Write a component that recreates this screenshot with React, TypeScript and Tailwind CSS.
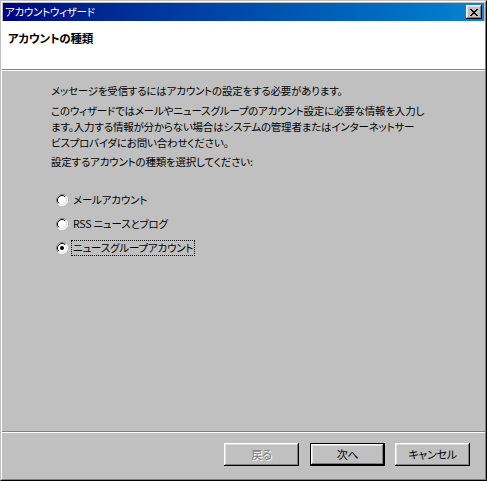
import React from "react";

const font = {
  fontFamily: '"Noto Sans CJK JP", "Liberation Sans", sans-serif',
  fontFeatureSettings: '"palt"',
};

function Radio({ checked }: { checked?: boolean }) {
  return (
    <svg width="12" height="12" viewBox="0 0 12 12" className="shrink-0">
      <circle cx="6" cy="6" r="5.5" fill="#ffffff" />
      <path d="M2.11 9.89 A5.5 5.5 0 0 1 9.89 2.11" fill="none" stroke="#808080" strokeWidth="1" />
      <path d="M9.89 2.11 A5.5 5.5 0 0 1 2.11 9.89" fill="none" stroke="#ffffff" strokeWidth="1" />
      <path d="M2.82 9.18 A4.5 4.5 0 0 1 9.18 2.82" fill="none" stroke="#000000" strokeWidth="1" />
      <path d="M9.18 2.82 A4.5 4.5 0 0 1 2.82 9.18" fill="none" stroke="#dfdfdf" strokeWidth="1" />
      {checked && <circle cx="6" cy="6" r="2" fill="#000000" />}
    </svg>
  );
}

function Button({
  label,
  primary,
  disabled,
  className = "",
}: {
  label: string;
  primary?: boolean;
  disabled?: boolean;
  className?: string;
}) {
  const bevel =
    "shadow-[inset_-1px_-1px_#000000,inset_1px_1px_#ffffff,inset_-2px_-2px_#808080,inset_2px_2px_#dfdfdf]";
  const inner = (
    <div
      className={`flex h-full w-full items-center justify-center bg-[#c0c0c0] text-[11px] tracking-[-0.3px] ${bevel} ${
        disabled ? "text-[#808080] [text-shadow:1px_1px_#ffffff]" : "text-black"
      }`}
    >
      {label}
    </div>
  );
  return (
    <div className={`h-[23px] w-[75px] shrink-0 ${primary ? "border border-black" : ""} ${className}`}>
      {inner}
    </div>
  );
}

export default function App() {
  return (
    <div className="h-[481px] w-[487px] bg-white" style={font}>
      <div className="flex h-full w-full flex-col border border-b-black border-l-[#c0c0c0] border-r-black border-t-[#c0c0c0]">
        <div className="flex flex-1 flex-col border border-b-[#808080] border-l-white border-r-[#808080] border-t-white bg-[#c0c0c0] p-px">
          {/* title bar */}
          <div className="flex h-[18px] items-center justify-between bg-gradient-to-r from-[#000080] to-[#1084d0] pl-[2px] pr-[2px]">
            <span className="text-[10.5px] leading-none tracking-[-0.3px] text-white">アカウントウィザード</span>
            <div className="flex h-[14px] w-[16px] items-center justify-center bg-[#c0c0c0] shadow-[inset_-1px_-1px_#000000,inset_1px_1px_#ffffff,inset_-2px_-2px_#808080,inset_2px_2px_#dfdfdf]">
              <svg width="8" height="7" viewBox="0 0 8 7">
                <path d="M0 0h2v1h-2zM6 0h2v1h-2zM1 1h2v1h-2zM5 1h2v1h-2zM2 2h4v1h-4zM3 3h2v1h-2zM2 4h4v1h-4zM1 5h2v1h-2zM5 5h2v1h-2zM0 6h2v1h-2zM6 6h2v1h-2z" fill="#000000" />
              </svg>
            </div>
          </div>

          {/* header */}
          <div className="-mx-px h-[49px] border-b border-b-[#808080] bg-white pl-[6px] pt-[10px]">
            <div className="text-[11.5px] font-bold leading-[14px] tracking-[-0.2px] text-black">アカウントの種類</div>
          </div>
          <div className="-mx-px h-px bg-white" />

          {/* body */}
          <div className="flex flex-1 flex-col whitespace-nowrap pl-[48px] pt-[12px] text-[10.5px] leading-[16px] tracking-[-0.2px] text-black">
            <p>メッセージを受信するにはアカウントの設定をする必要があります。</p>
            <p className="mt-[4px]">
              このウィザードではメールやニュースグループのアカウント設定に必要な情報を入力し
              <br />
              ます。入力する情報が分からない場合はシステムの管理者またはインターネットサー
              <br />
              ビスプロバイダにお問い合わせください。
            </p>
            <p className="mt-[3px]">設定するアカウントの種類を選択してください:</p>

            <div className="mt-[22px] flex flex-col gap-[8px] pl-[5px]">
              <div className="flex h-[16px] items-center gap-[4px]">
                <Radio />
                <span className="px-px">メールアカウント</span>
              </div>
              <div className="flex h-[16px] items-center gap-[4px]">
                <Radio />
                <span className="px-px">RSS ニュースとブログ</span>
              </div>
              <div className="flex h-[16px] items-center gap-[3px]">
                <Radio checked />
                <span className="border border-dotted border-black px-px leading-[14px]">
                  ニュースグループアカウント
                </span>
              </div>
            </div>
          </div>

          {/* footer */}
          <div className="-mx-px h-px bg-[#808080]" />
          <div className="-mx-px h-px bg-white" />
          <div className="flex h-[45px] items-start justify-end pr-[14px] pt-[10px]">
            <Button label="戻る" disabled />
            <Button label="次へ" primary className="ml-[11px]" />
            <Button label="キャンセル" className="ml-[10px]" />
          </div>
        </div>
      </div>
    </div>
  );
}
